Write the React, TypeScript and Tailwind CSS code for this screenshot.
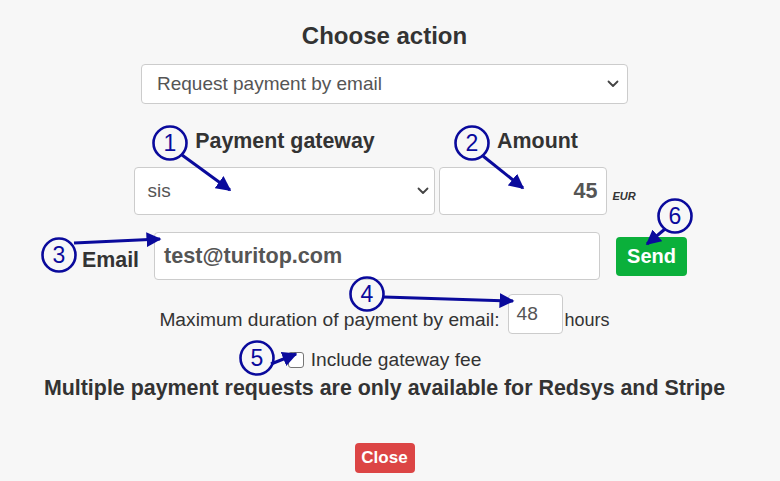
import React from "react";

const NAVY = "#0a0a9c";

function Chevron() {
  return (
    <svg width="12" height="8" viewBox="0 0 12 8" className="shrink-0">
      <polyline points="1.5,1.5 6,6 10.5,1.5" fill="none" stroke="#444" strokeWidth="1.8" strokeLinecap="round" strokeLinejoin="round" />
    </svg>
  );
}

type Callout = { n: string; cx: number; cy: number; from: [number, number]; to: [number, number] };

const callouts: Callout[] = [
  { n: "1", cx: 170, cy: 143, from: [182, 155], to: [230, 190] },
  { n: "2", cx: 472, cy: 143, from: [483, 156], to: [523, 188] },
  { n: "3", cx: 59, cy: 255, from: [74, 243], to: [160, 239] },
  { n: "4", cx: 367, cy: 294, from: [384, 297], to: [513, 301] },
  { n: "5", cx: 257, cy: 358, from: [271, 364], to: [296, 354] },
  { n: "6", cx: 675, cy: 216, from: [665, 229], to: [647, 244] },
];

function Annotations() {
  return (
    <svg className="absolute inset-0 pointer-events-none" width="780" height="481" viewBox="0 0 780 481">
      <defs>
        <marker id="head" viewBox="0 0 10 10" refX="9" refY="5" markerWidth="5" markerHeight="5" orient="auto">
          <path d="M0,0 L10,5 L0,10 z" fill={NAVY} />
        </marker>
      </defs>
      {callouts.map((c) => (
        <g key={c.n}>
          <line x1={c.from[0]} y1={c.from[1]} x2={c.to[0]} y2={c.to[1]} stroke={NAVY} strokeWidth="3" markerEnd="url(#head)" />
          <circle cx={c.cx} cy={c.cy} r="16.5" fill="none" stroke={NAVY} strokeWidth="2.6" />
          <text
            x={c.cx}
            y={c.cy + 8}
            textAnchor="middle"
            fontSize="23"
            fill={NAVY}
            fontFamily="'Liberation Sans', Arial, sans-serif"
          >
            {c.n}
          </text>
        </g>
      ))}
    </svg>
  );
}

export default function App() {
  return (
    <div
      className="relative w-[780px] h-[481px] overflow-hidden bg-[#f7f7f7] text-[#333]"
      style={{ fontFamily: "'Liberation Sans', Arial, sans-serif" }}
    >
      <div className="flex flex-col items-center pt-[22px] pr-[11px]">
        <h2 className="text-[24px] leading-[28px] font-bold">Choose action</h2>

        {/* action selector */}
        <div className="mt-[14px] w-[487px] h-[40px] flex items-center justify-between pl-[15px] pr-[8px] bg-white border border-[#cccccc] rounded-[4px] text-[#555] text-[19px]">
          <span>Request payment by email</span>
          <Chevron />
        </div>

        {/* gateway + amount */}
        <div className="mt-[25px] flex gap-[4px] ml-[1px]">
          <div className="flex flex-col items-center w-[301px]">
            <div className="text-[21.4px] leading-[24px] font-bold pl-[2px]">Payment gateway</div>
            <div className="mt-[14px] w-full h-[48px] flex items-center justify-between pl-[13px] pr-[5px] bg-white border border-[#cccccc] rounded-[4px] text-[#555] text-[19px]">
              <span>sis</span>
              <Chevron />
            </div>
          </div>
          <div className="flex flex-col items-center w-[198px]">
            <div className="text-[21.4px] leading-[24px] font-bold">Amount</div>
            <div className="mt-[14px] flex items-end gap-[6px]">
              <div className="w-[168px] h-[48px] flex items-center justify-end pr-[8px] bg-white border border-[#cccccc] rounded-[4px] text-[#555] text-[21.5px] font-bold">
                45
              </div>
              <span className="text-[11px] font-bold italic mb-[11px] w-[24px]">EUR</span>
            </div>
          </div>
        </div>

        {/* email row */}
        <div className="mt-[17px] flex items-center">
          <span className="text-[21.4px] leading-[24px] font-bold mt-[8px]">Email</span>
          <div className="ml-[15px] w-[446px] h-[48px] flex items-center pl-[9px] bg-white border border-[#cccccc] rounded-[4px] text-[#555] text-[21.6px] font-bold">
            test@turitop.com
          </div>
          <button className="ml-[16px] w-[71px] h-[39px] rounded-[4px] bg-[#0bb03b] text-white text-[20px] font-bold">
            Send
          </button>
        </div>

        {/* max duration row */}
        <div className="mt-[14px] flex items-start text-[19.2px]">
          <span className="mt-[15px] leading-[22px]">Maximum duration of payment by email:</span>
          <div className="ml-[8px] w-[55px] h-[40px] pl-[8px] pt-[8px] leading-[22px] bg-white border border-[#cccccc] rounded-[4px] text-[#555]">
            48
          </div>
          <span className="ml-[2px] mt-[15px] leading-[22px] text-[18px]">hours</span>
        </div>

        {/* gateway fee */}
        <label className="mt-[15px] flex items-center text-[19.2px] leading-[22px]">
          <span className="w-[16px] h-[16px] rounded-[3px] border border-[#767676] bg-white" />
          <span className="ml-[7px]">Include gateway fee</span>
        </label>

        <div className="mt-[5px] text-[21.4px] leading-[24px] font-bold">
          Multiple payment requests are only available for Redsys and Stripe
        </div>

        <button className="mt-[43px] w-[60px] h-[30px] rounded-[4px] bg-[#dc4545] text-white text-[17px] font-bold">
          Close
        </button>
      </div>

      <Annotations />
    </div>
  );
}
